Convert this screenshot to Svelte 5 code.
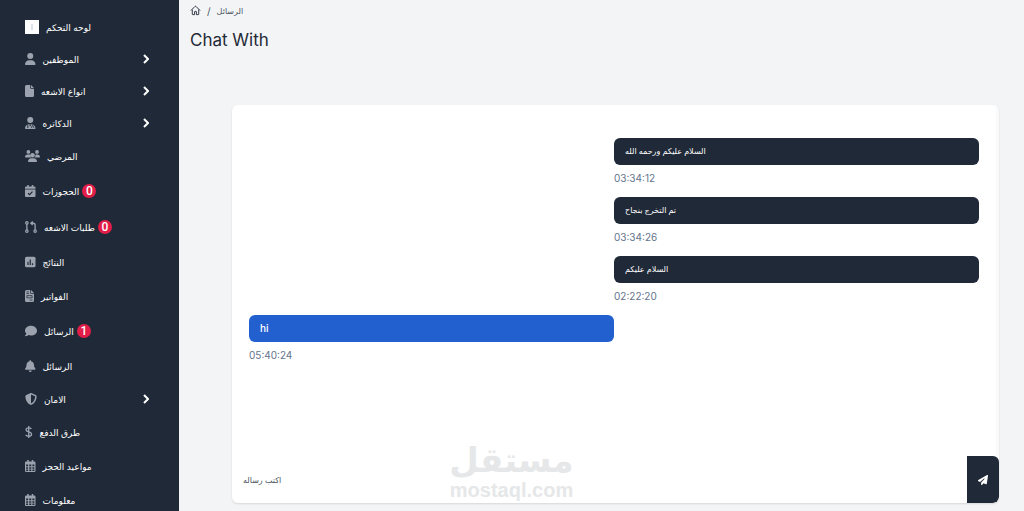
<script>
	// Sidebar entries
	const links = [
		{ label: 'لوحه التحكم', icon: 'logo' },
		{ label: 'الموظفين', icon: 'user', menu: true },
		{ label: 'انواع الاشعه', icon: 'file', menu: true },
		{ label: 'الدكاتره', icon: 'doctor', menu: true },
		{ label: 'المرضي', icon: 'users' },
		{ label: 'الحجوزات', icon: 'check', badge: 0 },
		{ label: 'طلبات الاشعه', icon: 'request', badge: 0 },
		{ label: 'النتائج', icon: 'poll' },
		{ label: 'الفواتير', icon: 'invoice' },
		{ label: 'الرسائل', icon: 'comment', badge: 1 },
		{ label: 'الرسائل', icon: 'bell' },
		{ label: 'الامان', icon: 'shield', menu: true },
		{ label: 'طرق الدفع', icon: 'dollar' },
		{ label: 'مواعيد الحجز', icon: 'calendar' },
		{ label: 'معلومات', icon: 'calendar' }
	];

	// viewBox width of each icon, all are 512 tall
	const widths = {
		user: 448,
		file: 384,
		doctor: 448,
		users: 640,
		check: 448,
		request: 512,
		poll: 448,
		invoice: 384,
		comment: 512,
		bell: 448,
		shield: 512,
		dollar: 320,
		calendar: 448
	};

	let messages = $state([
		{ text: 'السلام عليكم ورحمه الله', time: '03:34:12', lang: 'ar' },
		{ text: 'تم التخرج بنجاح', time: '03:34:26', lang: 'ar' },
		{ text: 'السلام عليكم', time: '02:22:20', lang: 'ar' },
		{ text: 'hi', time: '05:40:24', lang: 'en', mine: true }
	]);
	let draft = $state('');

	function send(e) {
		e.preventDefault();
		if (!draft.trim()) return;
		const lang = /[\u0600-\u06ff]/.test(draft) ? 'ar' : 'en';
		messages.push({ text: draft, time: new Date().toTimeString().slice(0, 8), lang, mine: true });
		draft = '';
	}
</script>

{#snippet glyph(name)}
	<svg class="icon" viewBox="0 0 {widths[name]} 512" aria-hidden="true">
		{#if name === 'user'}
			<path d="M224 256A128 128 0 1 0 224 0a128 128 0 1 0 0 256zm-46 48C80 304 0 384 0 482c0 17 13 30 30 30h388c17 0 30-13 30-30 0-98-80-178-178-178z" />
		{:else if name === 'file'}
			<path d="M64 0h160v128c0 18 14 32 32 32h128v288a64 64 0 0 1-64 64H64a64 64 0 0 1-64-64V64A64 64 0 0 1 64 0zm192 0 128 128H256z" />
		{:else if name === 'doctor'}
			<path d="M224 256A128 128 0 1 0 224 0a128 128 0 1 0 0 256zm-46 48C80 304 0 384 0 482c0 17 13 30 30 30h388c17 0 30-13 30-30 0-98-80-178-178-178z" />
			<path class="thin" d="M118 310v90M330 310v60M280 470v-40a46 46 0 0 1 92 0v40M200 310l24 80 24-80" />
			<circle class="hole" cx="118" cy="430" r="34" />
		{:else if name === 'users'}
			<circle cx="144" cy="80" r="80" />
			<circle cx="512" cy="80" r="80" />
			<circle cx="320" cy="224" r="96" />
			<path d="M107 192h86c14 0 26 3 38 9a128 128 0 0 0 36 119H21c-12 0-21-9-21-21 0-59 48-107 107-107zM405 320a128 128 0 0 0 41-119c11-6 25-9 39-9h48c59 0 107 48 107 107 0 12-9 21-21 21zM261 352h118c73 0 133 60 133 133 0 15-12 27-27 27H155c-15 0-27-12-27-27 0-73 60-133 133-133z" />
		{:else if name === 'check'}
			<path d="M96 0h64v64h128V0h64v64h48a48 48 0 0 1 48 48v48H0v-48a48 48 0 0 1 48-48h48zM0 192h448v272a48 48 0 0 1-48 48H48a48 48 0 0 1-48-48z" />
			<path class="cut" d="m130 350 65 62 124-130" />
		{:else if name === 'request'}
			<g class="line">
				<circle cx="80" cy="80" r="50" />
				<circle cx="80" cy="432" r="50" />
				<circle cx="432" cy="432" r="50" />
				<path d="M80 130v252M432 382V176c0-50-30-80-80-80h-80M330 20l-80 76 80 76" />
			</g>
		{:else if name === 'poll'}
			<path d="M64 32h320a64 64 0 0 1 64 64v320a64 64 0 0 1-64 64H64a64 64 0 0 1-64-64V96a64 64 0 0 1 64-64z" />
			<path class="cut" d="M128 240v145M224 145v240M320 305v80" />
		{:else if name === 'invoice'}
			<path d="M64 0h160v128c0 18 14 32 32 32h128v288a64 64 0 0 1-64 64H64a64 64 0 0 1-64-64V64A64 64 0 0 1 64 0zm192 0 128 128H256z" />
			<path class="thin" d="M64 80h100M64 150h100M80 240h224v96H80zM200 430h120" />
		{:else if name === 'comment'}
			<path d="M256 32c141 0 256 93 256 208S397 448 256 448c-37 0-72-6-104-18-30 22-78 50-136 50-7 0-13-4-15-10-3-6-1-13 3-17 17-20 46-57 56-92C23 328 0 285 0 240 0 125 115 32 256 32z" />
		{:else if name === 'bell'}
			<path d="M224 0c-18 0-32 14-32 32v19C119 66 64 130 64 208v19c0 47-17 92-48 127l-8 9c-8 9-10 23-5 34s16 19 29 19h384c13 0 24-7 29-19s3-25-5-34l-8-9c-31-35-48-80-48-127v-19c0-78-55-142-128-157V32c0-18-14-32-32-32zm64 448H160a64 64 0 0 0 128 0z" />
		{:else if name === 'shield'}
			<path fill-rule="evenodd" d="M256 0c5 0 9 1 13 3l188 80c22 9 39 31 39 57-1 99-42 281-214 364-16 8-36 8-52 0C57 421 17 239 16 140c0-26 17-48 39-57L243 3c4-2 9-3 13-3zm0 67v378c138-67 175-215 176-304z" />
		{:else if name === 'dollar'}
			<path class="line" d="M160 0v512M272 126c-20-32-62-50-112-50-66 0-116 34-116 84 0 120 236 64 236 188 0 56-54 88-120 88-56 0-106-20-132-56" />
		{:else if name === 'calendar'}
			<path d="M96 0h64v64h128V0h64v64h48a48 48 0 0 1 48 48v352a48 48 0 0 1-48 48H48a48 48 0 0 1-48-48V112a48 48 0 0 1 48-48h48z" />
			<path class="hole" d="M48 192h84v70H48zM180 192h88v70h-88zM316 192h84v70h-84zM48 304h84v64H48zM180 304h88v64h-88zM316 304h84v64h-84zM48 410h84v54H48zM180 410h88v54h-88zM316 410h84v54h-84z" />
		{/if}
	</svg>
{/snippet}

<div class="layout">
	<nav class="sidebar" lang="ar">
		{#each links as link}
			{#if link.menu}
				<button class="item" type="button">
					{@render glyph(link.icon)}
					<span class="label">{link.label}</span>
					<svg class="chevron" viewBox="0 0 6 10" aria-hidden="true"><path d="m1 1 4 4-4 4" /></svg>
				</button>
			{:else}
				<a class="item plain" class:tall={link.badge !== undefined} class:home={link.icon === 'logo'} href="#top">
					{#if link.icon === 'logo'}
						<span class="logo"><i></i></span>
					{:else}
						{@render glyph(link.icon)}
					{/if}
					<span class="label">{link.label}</span>
					{#if link.badge !== undefined}
						<span class="badge">{link.badge}</span>
					{/if}
				</a>
			{/if}
		{/each}
	</nav>

	<main>
		<div class="breadcrumb">
			<a href="#top" aria-label="Home">
				<svg viewBox="0 0 24 24" aria-hidden="true">
					<path d="m2 12 9-9q1-1 2 0l9 9M5 10v10q0 1 1 1h4v-6q0-1 1-1h2q1 0 1 1v6h4q1 0 1-1V10" />
				</svg>
			</a>
			<span>/</span>
			<a class="crumb" href="#top">الرسائل</a>
		</div>
		<h1>Chat With</h1>

		<section class="card">
			<div class="messages">
				{#each messages as message}
					<div class="message" class:mine={message.mine}>
						<p class="bubble" class:arabic={message.lang === 'ar'} lang={message.lang}>{message.text}</p>
						<time>{message.time}</time>
					</div>
				{/each}
			</div>
			<div class="watermark">
				<span class="mark">مستقل</span>
				<span class="domain">mostaql.com</span>
			</div>
			<form onsubmit={send}>
				<input type="text" placeholder="اكتب رساله" aria-label="اكتب رساله" bind:value={draft} />
				<button class="send" type="submit" aria-label="Send">
					<svg viewBox="0 0 512 512" aria-hidden="true">
						<path d="M498 6c10 7 15 19 14 31l-64 416c-2 9-8 18-16 23s-19 5-28 1l-120-50-68 75c-9 9-23 13-36 8s-20-17-20-30v-84c0-4 2-8 4-11l168-182c6-7 5-16-1-22s-15-7-22-1L106 361l-88-44C7 311 0 301 0 289s6-23 16-29L464 4c11-6 24-5 34 2z" />
					</svg>
				</button>
			</form>
		</section>
	</main>
</div>

<style>
	:global(body) {
		background: #f3f4f6;
	}

	.layout {
		display: flex;
		min-height: 100vh;
		font-family: Inter, 'DejaVu Sans', sans-serif;
		font-size: 10px;
		color: #1f2937;
	}

	a {
		color: inherit;
		text-decoration: none;
	}

	button {
		border: 0;
		font: inherit;
		cursor: pointer;
	}

	.sidebar {
		position: sticky;
		top: 0;
		flex: 0 0 179px;
		display: flex;
		flex-direction: column;
		height: 100vh;
		padding: 11px 30px 0 25px;
		box-sizing: border-box;
		overflow-y: auto;
		scrollbar-width: none;
		background: #1f2937;
		color: #fff;
		font-size: 9px;
	}

	.item {
		flex: none;
		display: flex;
		align-items: center;
		height: 32px;
		padding: 0;
		background: none;
		color: #fff;
	}

	.plain {
		height: 34px;
	}

	.home {
		height: 32px;
	}

	.tall {
		height: 36px;
	}

	.icon {
		height: 12px;
		fill: #9ca3af;
	}

	.icon .cut,
	.icon .thin {
		fill: none;
		stroke: #1f2937;
		stroke-width: 50;
	}

	.icon .thin {
		stroke-width: 32;
	}

	.icon .hole {
		fill: #1f2937;
	}

	.icon .line {
		fill: none;
		stroke: #9ca3af;
		stroke-width: 56;
	}

	.label {
		margin-left: 7px;
		white-space: nowrap;
	}

	.chevron {
		height: 10px;
		margin-left: auto;
		fill: none;
		stroke: #fff;
		stroke-width: 2;
	}

	.logo {
		display: grid;
		place-items: center;
		width: 14px;
		height: 14px;
		background: #fff;
	}

	.logo i {
		width: 2px;
		height: 6px;
		background: #dbe3ee;
	}

	.badge {
		display: grid;
		place-items: center;
		width: 14px;
		height: 14px;
		margin-left: 3px;
		border-radius: 50%;
		background: #e11d48;
		font-family: Roboto, sans-serif;
		font-size: 12px;
		font-weight: 500;
	}

	main {
		flex: 1;
		min-width: 0;
		padding: 3px 25px 8px 11px;
	}

	.breadcrumb {
		display: flex;
		align-items: center;
		gap: 6px;
		height: 15px;
		color: #4b5563;
	}

	.breadcrumb a {
		display: flex;
	}

	.breadcrumb .crumb {
		font-size: 8px;
	}

	.breadcrumb svg {
		width: 11px;
		fill: none;
		stroke: #1f2937;
		stroke-width: 2;
	}

	h1 {
		margin: 10px 0 0;
		font-size: 17px;
		line-height: 24px;
		font-weight: 400;
	}

	.card {
		position: relative;
		display: flex;
		flex-direction: column;
		margin: 53px 0 0 42px;
		border-radius: 6px;
		background: #fff;
		box-shadow: 0 1px 2px rgba(0, 0, 0, 0.12);
		overflow: hidden;
	}

	.messages {
		flex: 1;
		display: flex;
		flex-direction: column;
		gap: 11px;
		min-height: 301px;
		padding: 33px 17px 17px;
		border-right: 3px solid #fafafa;
	}

	.message {
		width: 50%;
		margin-left: auto;
	}

	.message.mine {
		margin-left: 0;
	}

	.bubble {
		margin: 0;
		padding: 5px 11px;
		border-radius: 6px;
		background: #1f2937;
		color: #fff;
		font-weight: 500;
		line-height: 17px;
	}

	.bubble.arabic {
		font-size: 8px;
	}

	.mine .bubble {
		background: #2360cf;
	}

	time {
		display: block;
		margin-top: 5px;
		line-height: 16px;
		color: #64748b;
	}

	/* Overlay stamp at the foot of the card */
	.watermark {
		position: absolute;
		bottom: 3px;
		left: 0;
		right: 0;
		display: flex;
		flex-direction: column;
		align-items: center;
		padding-right: 208px;
		color: #e5e7e8;
		font-weight: 700;
		pointer-events: none;
	}

	.mark {
		font-family: 'DejaVu Sans', sans-serif;
		font-size: 34px;
		line-height: 40px;
	}

	.domain {
		font-family: 'Liberation Sans', sans-serif;
		font-size: 20px;
		line-height: 20px;
	}

	form {
		display: flex;
		height: 47px;
	}

	input {
		flex: 1;
		min-width: 0;
		padding: 0 11px;
		border: 0;
		outline: none;
		background: none;
		font: inherit;
		font-size: 8px;
	}

	input::placeholder {
		color: #4b5563;
	}

	.send {
		display: grid;
		place-items: center;
		width: 32px;
		padding: 0;
		border-radius: 0 6px 6px 0;
		background: #1f2937;
	}

	.send svg {
		width: 10px;
		fill: #fff;
	}
</style>
